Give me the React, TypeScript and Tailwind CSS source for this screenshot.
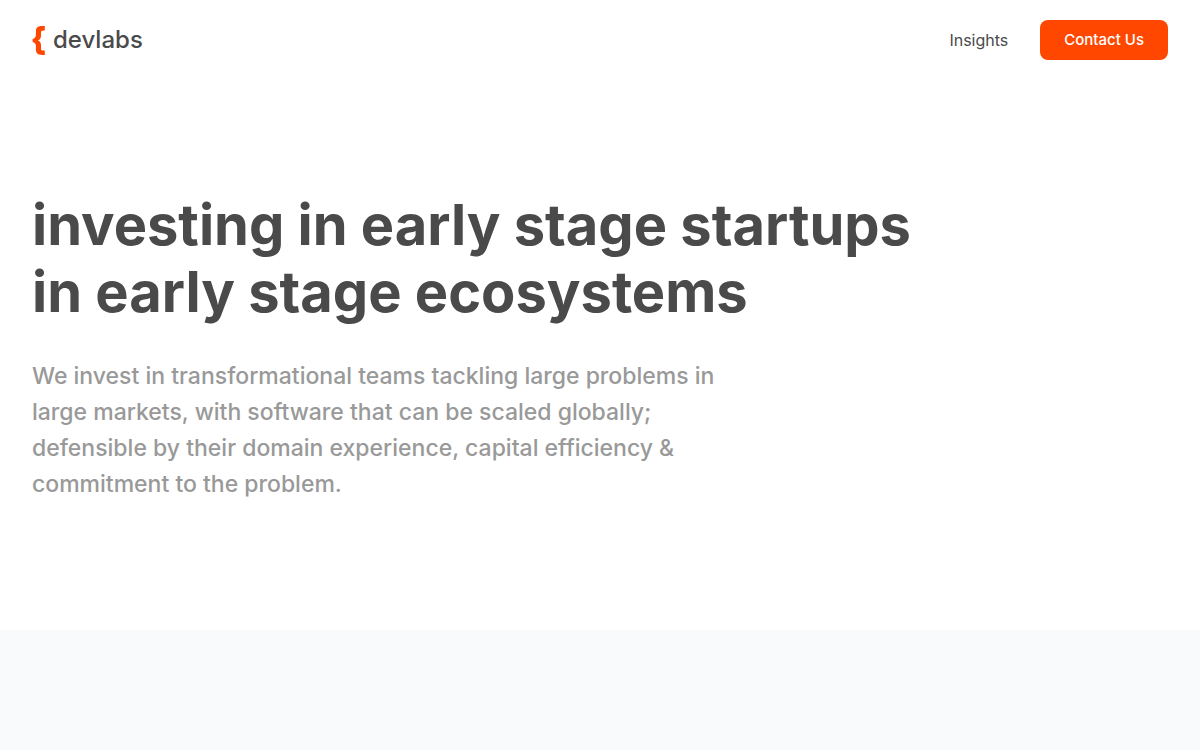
const Logo = () => (
  <a href="/" className="flex items-center gap-2 text-2xl font-medium">
    <svg
      viewBox="0 0 13 30"
      className="h-[30px] w-[13px] text-[#ff4700]"
      fill="currentColor"
      aria-hidden="true"
    >
      <path d="M12.8 1V5.4H11.6C9.7 5.4 9 6.1 9 7.6V10.6C9 13.2 8 14.8 6 15.5C8 16.2 9 17.8 9 20.4V23.4C9 24.9 9.7 25.6 11.6 25.6H12.8V30H10C5.8 30 3.9 28.2 3.9 24.6V21C3.9 18.8 2.8 17.6 0.6 17V14C2.8 13.4 3.9 12.2 3.9 10V6.4C3.9 2.8 5.8 1 10 1Z" />
    </svg>
    devlabs
  </a>
);

const Header = () => (
  <header className="flex items-center justify-between px-8 py-5">
    <Logo />
    <nav className="flex items-center gap-8">
      <a href="/insights">Insights</a>
      <button
        type="button"
        className="h-10 rounded-lg bg-[#ff4700] px-6 text-[15px] font-medium text-white"
      >
        Contact Us
      </button>
    </nav>
  </header>
);

const Hero = () => (
  <section className="px-8 pt-28 pb-32">
    <h1 className="text-[56px] leading-[67px] font-bold">
      investing in early stage startups
      <br />
      in early stage ecosystems
    </h1>
    <p className="mt-8 max-w-[700px] text-[23px] leading-9 font-medium text-[#999999]">
      We invest in transformational teams tackling large problems in large
      markets, with software that can be scaled globally; defensible by their
      domain experience, capital efficiency &amp; commitment to the problem.
    </p>
  </section>
);

export default function App() {
  return (
    <div className="flex min-h-screen flex-col bg-white font-['Inter',sans-serif] text-[#4a4a4a]">
      <Header />
      <Hero />
      <section className="grow bg-[#f9fafc]" />
    </div>
  );
}
